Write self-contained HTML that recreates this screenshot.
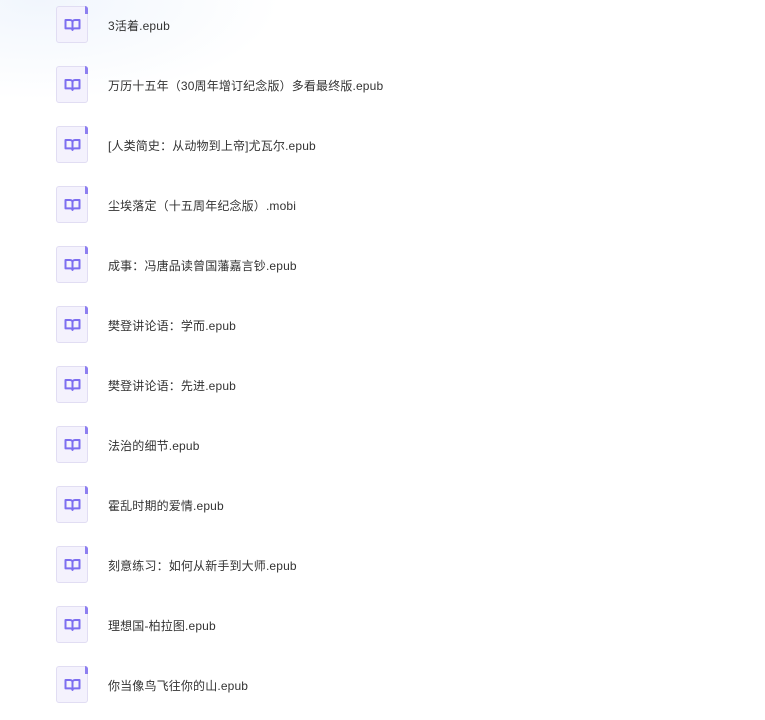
<!DOCTYPE html>
<html><head><meta charset="utf-8"><style>
body{margin:0;width:765px;height:716px;overflow:hidden;background:#fff;font-family:"Liberation Sans","Noto Sans CJK SC",sans-serif;position:relative}
.bg{position:absolute;left:0;top:0;width:765px;height:716px;background:radial-gradient(ellipse 240px 100px at 40px 0px,#f1f6fd 0%,rgba(255,255,255,0) 100%)}
.row{position:absolute;left:0;height:60px;width:765px}
.ic{position:absolute;left:56px;top:6px;width:32px;height:37px;background:#f4f2fd;border:1px solid #e1ddf3;border-radius:3px;box-sizing:border-box}
.ic:after{content:"";position:absolute;right:-1px;top:-1px;width:3px;height:8px;background:#8d7ff0;border-radius:0 3px 0 0}
.ic svg{position:absolute;left:7px;top:11px}
.t{position:absolute;left:108px;top:18px;font-size:12px;color:#333;line-height:16px;letter-spacing:0.15px}
</style></head><body><div class="bg"></div>
<div class="row" style="top:0"><div class="ic"><svg width="17" height="14" viewBox="0 0 17 14"><path d="M1.5 2h4.5c1.4 0 2.5 1 2.5 2.2V12c0-1-1-1.6-2.2-1.6H1.5z M15.5 2h-4.5c-1.4 0-2.5 1-2.5 2.2V12c0-1 1-1.6 2.2-1.6h4.8z" fill="none" stroke="#7d6ef0" stroke-width="2" stroke-linejoin="round"/></svg></div><div class="t">3活着.epub</div></div>
<div class="row" style="top:60px"><div class="ic"><svg width="17" height="14" viewBox="0 0 17 14"><path d="M1.5 2h4.5c1.4 0 2.5 1 2.5 2.2V12c0-1-1-1.6-2.2-1.6H1.5z M15.5 2h-4.5c-1.4 0-2.5 1-2.5 2.2V12c0-1 1-1.6 2.2-1.6h4.8z" fill="none" stroke="#7d6ef0" stroke-width="2" stroke-linejoin="round"/></svg></div><div class="t">万历十五年（30周年增订纪念版）多看最终版.epub</div></div>
<div class="row" style="top:120px"><div class="ic"><svg width="17" height="14" viewBox="0 0 17 14"><path d="M1.5 2h4.5c1.4 0 2.5 1 2.5 2.2V12c0-1-1-1.6-2.2-1.6H1.5z M15.5 2h-4.5c-1.4 0-2.5 1-2.5 2.2V12c0-1 1-1.6 2.2-1.6h4.8z" fill="none" stroke="#7d6ef0" stroke-width="2" stroke-linejoin="round"/></svg></div><div class="t">[人类简史：从动物到上帝]尤瓦尔.epub</div></div>
<div class="row" style="top:180px"><div class="ic"><svg width="17" height="14" viewBox="0 0 17 14"><path d="M1.5 2h4.5c1.4 0 2.5 1 2.5 2.2V12c0-1-1-1.6-2.2-1.6H1.5z M15.5 2h-4.5c-1.4 0-2.5 1-2.5 2.2V12c0-1 1-1.6 2.2-1.6h4.8z" fill="none" stroke="#7d6ef0" stroke-width="2" stroke-linejoin="round"/></svg></div><div class="t">尘埃落定（十五周年纪念版）.mobi</div></div>
<div class="row" style="top:240px"><div class="ic"><svg width="17" height="14" viewBox="0 0 17 14"><path d="M1.5 2h4.5c1.4 0 2.5 1 2.5 2.2V12c0-1-1-1.6-2.2-1.6H1.5z M15.5 2h-4.5c-1.4 0-2.5 1-2.5 2.2V12c0-1 1-1.6 2.2-1.6h4.8z" fill="none" stroke="#7d6ef0" stroke-width="2" stroke-linejoin="round"/></svg></div><div class="t">成事：冯唐品读曾国藩嘉言钞.epub</div></div>
<div class="row" style="top:300px"><div class="ic"><svg width="17" height="14" viewBox="0 0 17 14"><path d="M1.5 2h4.5c1.4 0 2.5 1 2.5 2.2V12c0-1-1-1.6-2.2-1.6H1.5z M15.5 2h-4.5c-1.4 0-2.5 1-2.5 2.2V12c0-1 1-1.6 2.2-1.6h4.8z" fill="none" stroke="#7d6ef0" stroke-width="2" stroke-linejoin="round"/></svg></div><div class="t">樊登讲论语：学而.epub</div></div>
<div class="row" style="top:360px"><div class="ic"><svg width="17" height="14" viewBox="0 0 17 14"><path d="M1.5 2h4.5c1.4 0 2.5 1 2.5 2.2V12c0-1-1-1.6-2.2-1.6H1.5z M15.5 2h-4.5c-1.4 0-2.5 1-2.5 2.2V12c0-1 1-1.6 2.2-1.6h4.8z" fill="none" stroke="#7d6ef0" stroke-width="2" stroke-linejoin="round"/></svg></div><div class="t">樊登讲论语：先进.epub</div></div>
<div class="row" style="top:420px"><div class="ic"><svg width="17" height="14" viewBox="0 0 17 14"><path d="M1.5 2h4.5c1.4 0 2.5 1 2.5 2.2V12c0-1-1-1.6-2.2-1.6H1.5z M15.5 2h-4.5c-1.4 0-2.5 1-2.5 2.2V12c0-1 1-1.6 2.2-1.6h4.8z" fill="none" stroke="#7d6ef0" stroke-width="2" stroke-linejoin="round"/></svg></div><div class="t">法治的细节.epub</div></div>
<div class="row" style="top:480px"><div class="ic"><svg width="17" height="14" viewBox="0 0 17 14"><path d="M1.5 2h4.5c1.4 0 2.5 1 2.5 2.2V12c0-1-1-1.6-2.2-1.6H1.5z M15.5 2h-4.5c-1.4 0-2.5 1-2.5 2.2V12c0-1 1-1.6 2.2-1.6h4.8z" fill="none" stroke="#7d6ef0" stroke-width="2" stroke-linejoin="round"/></svg></div><div class="t">霍乱时期的爱情.epub</div></div>
<div class="row" style="top:540px"><div class="ic"><svg width="17" height="14" viewBox="0 0 17 14"><path d="M1.5 2h4.5c1.4 0 2.5 1 2.5 2.2V12c0-1-1-1.6-2.2-1.6H1.5z M15.5 2h-4.5c-1.4 0-2.5 1-2.5 2.2V12c0-1 1-1.6 2.2-1.6h4.8z" fill="none" stroke="#7d6ef0" stroke-width="2" stroke-linejoin="round"/></svg></div><div class="t">刻意练习：如何从新手到大师.epub</div></div>
<div class="row" style="top:600px"><div class="ic"><svg width="17" height="14" viewBox="0 0 17 14"><path d="M1.5 2h4.5c1.4 0 2.5 1 2.5 2.2V12c0-1-1-1.6-2.2-1.6H1.5z M15.5 2h-4.5c-1.4 0-2.5 1-2.5 2.2V12c0-1 1-1.6 2.2-1.6h4.8z" fill="none" stroke="#7d6ef0" stroke-width="2" stroke-linejoin="round"/></svg></div><div class="t">理想国-柏拉图.epub</div></div>
<div class="row" style="top:660px"><div class="ic"><svg width="17" height="14" viewBox="0 0 17 14"><path d="M1.5 2h4.5c1.4 0 2.5 1 2.5 2.2V12c0-1-1-1.6-2.2-1.6H1.5z M15.5 2h-4.5c-1.4 0-2.5 1-2.5 2.2V12c0-1 1-1.6 2.2-1.6h4.8z" fill="none" stroke="#7d6ef0" stroke-width="2" stroke-linejoin="round"/></svg></div><div class="t">你当像鸟飞往你的山.epub</div></div>
</body></html>
